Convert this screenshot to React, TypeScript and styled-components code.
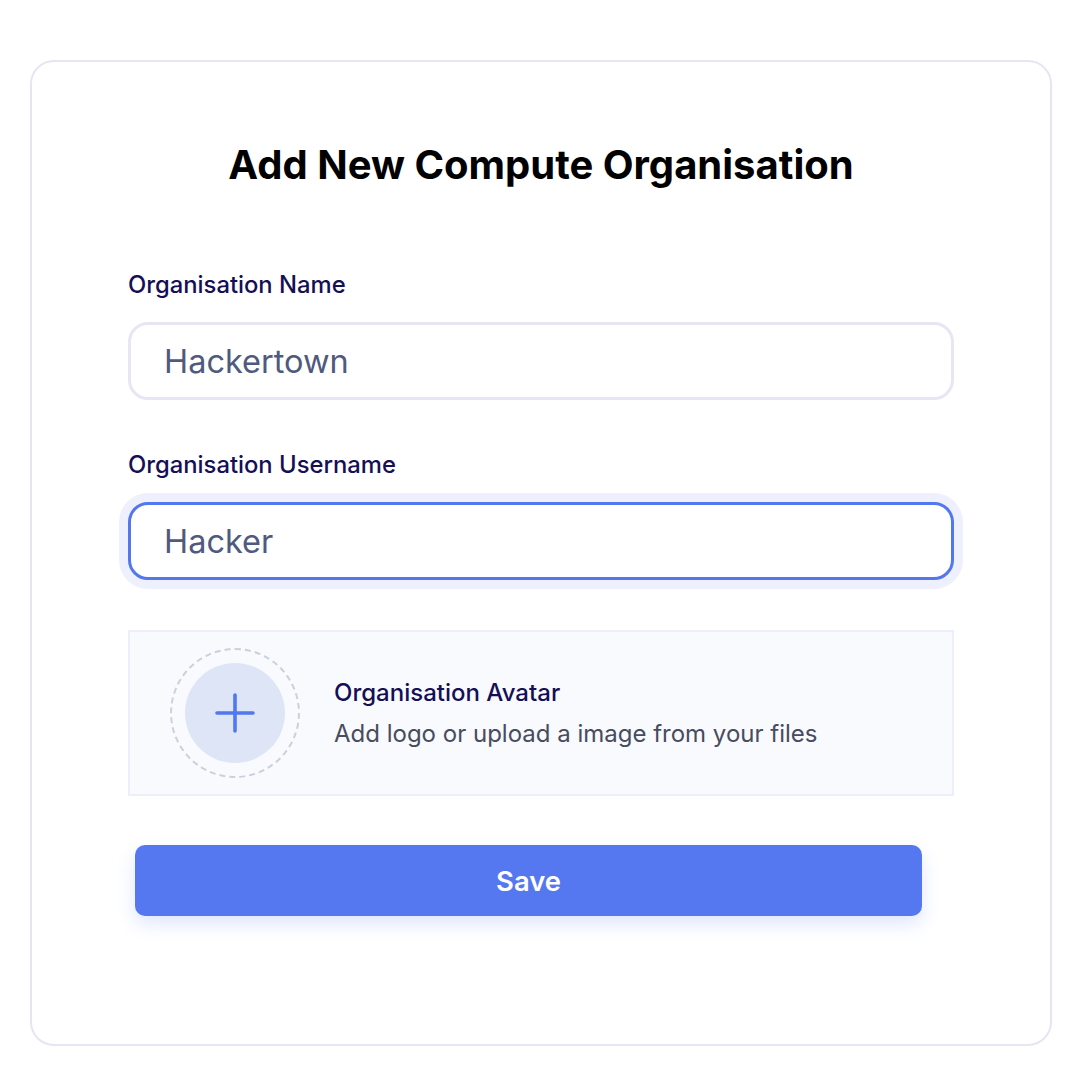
import React from "react";
import styled, { createGlobalStyle } from "styled-components";

const GlobalStyle = createGlobalStyle`
  body {
    margin: 0;
    background: #ffffff;
    font-family: Inter, "Noto Sans", sans-serif;
  }
`;

const Page = styled.div`
  padding: 60px 0 0 30px;
`;

const Card = styled.div`
  box-sizing: border-box;
  width: 1022px;
  height: 986px;
  border: 2px solid #e6e6f3;
  border-radius: 24px;
  padding: 79px 96px 0;
  display: flex;
  flex-direction: column;
`;

const Title = styled.h1`
  margin: 0 0 82px;
  font-size: 40px;
  line-height: 48px;
  font-weight: 700;
  color: #000000;
  text-align: center;
`;

const Label = styled.label`
  display: block;
  font-size: 23.8px;
  line-height: 28px;
  font-weight: 500;
  color: #150f55;
  margin-bottom: 23px;
`;

const Field = styled.div<{ $gap: number }>`
  margin-bottom: ${(p) => p.$gap}px;
`;

const Input = styled.input<{ $focused?: boolean }>`
  box-sizing: border-box;
  display: block;
  width: 100%;
  height: 78px;
  padding: 0 33px;
  border: 3px solid ${(p) => (p.$focused ? "#5277ee" : "#e6e6f5")};
  border-radius: 20px;
  box-shadow: ${(p) => (p.$focused ? "0 0 0 9px #eef1fd" : "none")};
  font-family: Inter, "Noto Sans", sans-serif;
  font-size: 32.5px;
  color: #4f5a7e;
  background: #ffffff;
  outline: none;
`;

const AvatarBox = styled.div`
  box-sizing: border-box;
  height: 166px;
  display: flex;
  align-items: center;
  gap: 34px;
  padding-left: 40px;
  background: #f9fafe;
  border: 2px solid #eceef9;
  margin-bottom: 49px;
`;

const DashedRing = styled.div`
  box-sizing: border-box;
  width: 130px;
  height: 130px;
  border-radius: 50%;
  border: 2px dashed #cdd0da;
  display: flex;
  align-items: center;
  justify-content: center;
  flex-shrink: 0;
`;

const AddCircle = styled.div`
  width: 100px;
  height: 100px;
  border-radius: 50%;
  background: #dde5f7;
  display: flex;
  align-items: center;
  justify-content: center;
`;

const AvatarText = styled.div`
  display: flex;
  flex-direction: column;
  gap: 13px;
`;

const AvatarTitle = styled.div`
  font-size: 24px;
  line-height: 28px;
  font-weight: 500;
  color: #150f55;
`;

const AvatarHint = styled.div`
  font-size: 24px;
  line-height: 28px;
  color: #474c5e;
`;

const SaveButton = styled.button`
  margin-left: 7px;
  width: 787px;
  height: 71px;
  border: none;
  border-radius: 10px;
  background: #5578f0;
  color: #ffffff;
  font-family: Inter, "Noto Sans", sans-serif;
  font-size: 27.4px;
  font-weight: 600;
  box-shadow: 0 8px 18px rgba(85, 120, 240, 0.18);
  cursor: pointer;
`;

function PlusIcon() {
  return (
    <svg width="40" height="40" viewBox="0 0 40 40">
      <path d="M20 2v36M2 20h36" stroke="#5277ee" strokeWidth="3.6" strokeLinecap="round" />
    </svg>
  );
}

export default function App() {
  return (
    <>
      <GlobalStyle />
      <Page>
        <Card>
          <Title>Add New Compute Organisation</Title>
          <Field $gap={51}>
            <Label>Organisation Name</Label>
            <Input defaultValue="Hackertown" />
          </Field>
          <Field $gap={50}>
            <Label>Organisation Username</Label>
            <Input $focused defaultValue="Hacker" />
          </Field>
          <AvatarBox>
            <DashedRing>
              <AddCircle>
                <PlusIcon />
              </AddCircle>
            </DashedRing>
            <AvatarText>
              <AvatarTitle>Organisation Avatar</AvatarTitle>
              <AvatarHint>Add logo or upload a image from your files</AvatarHint>
            </AvatarText>
          </AvatarBox>
          <SaveButton>Save</SaveButton>
        </Card>
      </Page>
    </>
  );
}
